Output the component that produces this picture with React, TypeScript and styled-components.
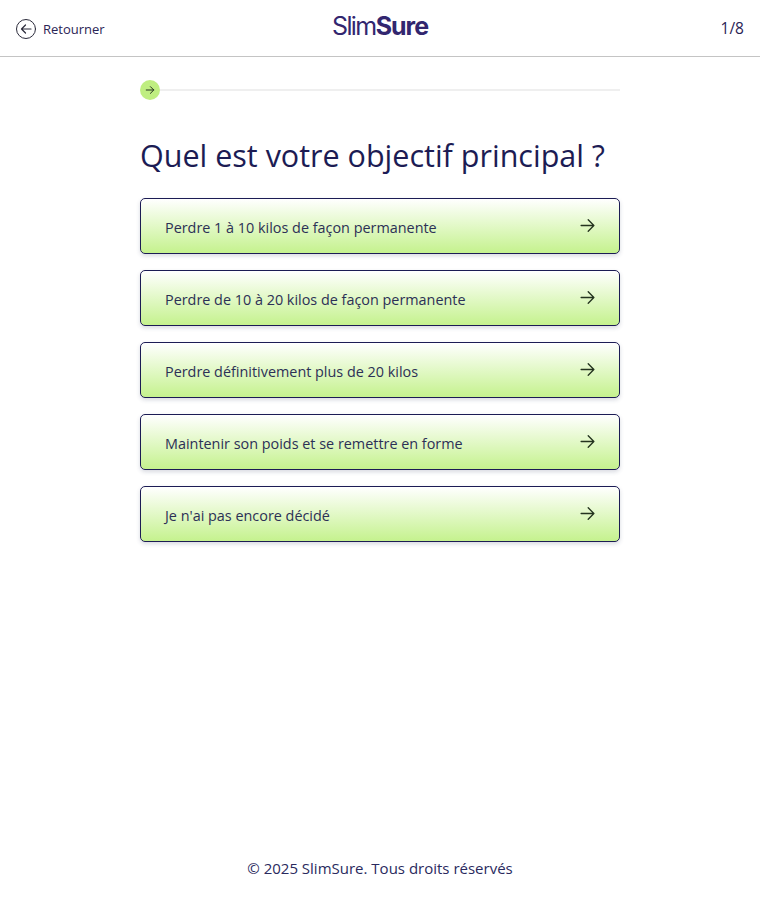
import React from "react";
import styled, { createGlobalStyle } from "styled-components";

const Global = createGlobalStyle`
  html, body { margin: 0; padding: 0; background: #fff; }
  body { font-family: "Open Sans", "Noto Sans", sans-serif; color: #1c1c54; }
`;

const Page = styled.div`
  height: 900px;
  display: flex;
  flex-direction: column;
`;

const Header = styled.header`
  height: 56px;
  border-bottom: 1px solid #c4c4c4;
  display: grid;
  grid-template-columns: 1fr auto 1fr;
  align-items: center;
  padding: 0 16px;
`;

const Back = styled.a`
  display: flex;
  align-items: center;
  gap: 7px;
  font-size: 13px;
  color: #2a2455;
  padding-top: 1px;
`;

const Logo = styled.div`
  font-family: Inter, "Liberation Sans", sans-serif;
  font-size: 25px;
  line-height: 30px;
  letter-spacing: -1.6px;
  color: #32266f;
  margin-top: -4px;
`;

const LogoBold = styled.span`
  font-weight: 700;
  letter-spacing: -1px;
`;

const Count = styled.div`
  justify-self: end;
  font-size: 15.5px;
  color: #2a2455;
`;

const Main = styled.main`
  width: 480px;
  margin: 0 auto;
  flex: 1;
`;

const Progress = styled.div`
  display: flex;
  align-items: center;
  margin-top: 23px;
`;

const Dot = styled.div`
  width: 20px;
  height: 20px;
  border-radius: 50%;
  background: #bfee80;
  display: flex;
  align-items: center;
  justify-content: center;
  flex: none;
`;

const Track = styled.div`
  flex: 1;
  height: 2px;
  background: #efefef;
`;

const Title = styled.h1`
  margin: 32px 0 20px;
  font-size: 30.5px;
  line-height: 46px;
  font-weight: 400;
  color: #1c1c54;
`;

const Options = styled.div`
  display: flex;
  flex-direction: column;
  gap: 16px;
`;

const Option = styled.button`
  height: 56px;
  box-sizing: border-box;
  display: flex;
  align-items: center;
  justify-content: space-between;
  padding: 2px 23px 0 24px;
  border: 1px solid #1c1c54;
  border-radius: 5px;
  background: linear-gradient(180deg, #ffffff 0%, #c5f28e 100%);
  box-shadow: 0 2px 4px rgba(40, 50, 90, 0.18);
  font-family: inherit;
  font-size: 14.4px;
  color: #2c3056;
`;

const OptionArrow = styled.span`
  display: flex;
  margin-top: -4px;
`;

const Footer = styled.footer`
  text-align: center;
  font-size: 15px;
  line-height: 20px;
  color: #2a2a5e;
  padding-bottom: 22px;
`;

const ArrowRight = ({ size, sw }: { size: number; sw: number }) => (
  <svg width={size} height={size} viewBox="0 0 24 24" fill="none" stroke="#24331f" strokeWidth={sw} strokeLinecap="round" strokeLinejoin="round">
    <path d="M3 12h18M13 4l8 8-8 8" />
  </svg>
);

const BackIcon = () => (
  <svg width="20" height="20" viewBox="0 0 20 20" fill="none" stroke="#2a2a3a" strokeWidth="1" strokeLinecap="round" strokeLinejoin="round">
    <circle cx="10" cy="10" r="9.5" />
    <path d="M15 10H5.5M9.5 6l-4 4 4 4" strokeWidth="1.2" />
  </svg>
);

const items = [
  "Perdre 1 à 10 kilos de façon permanente",
  "Perdre de 10 à 20 kilos de façon permanente",
  "Perdre définitivement plus de 20 kilos",
  "Maintenir son poids et se remettre en forme",
  "Je n'ai pas encore décidé",
];

export default function App() {
  return (
    <Page>
      <Global />
      <Header>
        <Back>
          <BackIcon />
          Retourner
        </Back>
        <Logo>
          Slim<LogoBold>Sure</LogoBold>
        </Logo>
        <Count>1/8</Count>
      </Header>
      <Main>
        <Progress>
          <Dot>
            <ArrowRight size={10} sw={2.4} />
          </Dot>
          <Track />
        </Progress>
        <Title>Quel est votre objectif principal ?</Title>
        <Options>
          {items.map((t) => (
            <Option key={t}>
              {t}
              <OptionArrow>
                <ArrowRight size={17} sw={1.9} />
              </OptionArrow>
            </Option>
          ))}
        </Options>
      </Main>
      <Footer>© 2025 SlimSure. Tous droits réservés</Footer>
    </Page>
  );
}
